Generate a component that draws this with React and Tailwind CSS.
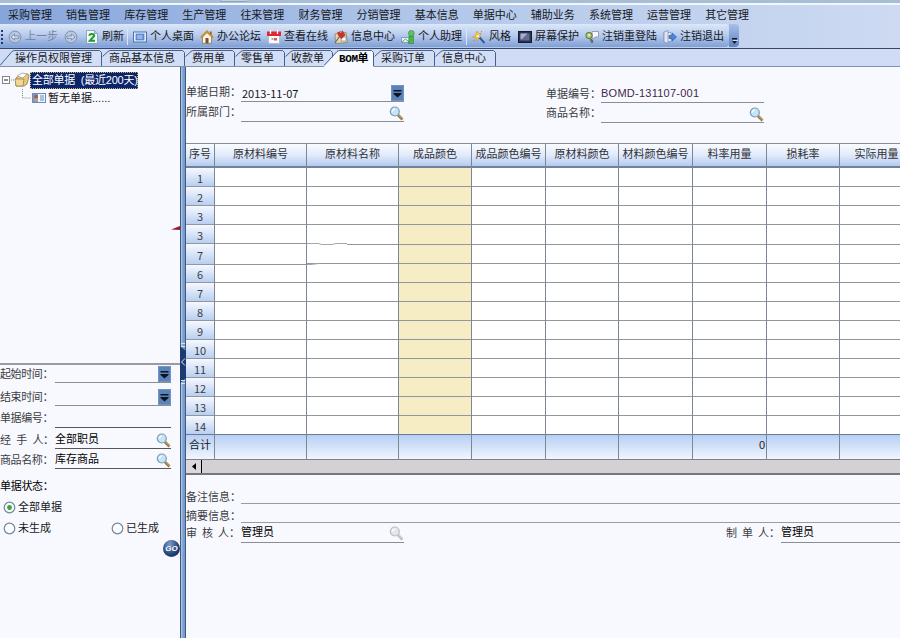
import React from 'react';

const menus = ['采购管理', '销售管理', '库存管理', '生产管理', '往来管理', '财务管理', '分销管理', '基本信息', '单据中心', '辅助业务', '系统管理', '运营管理', '其它管理'];

const tools = [
  { icon: 'back', text: '上一步', w: 'w-[56px]', off: true },
  { icon: 'forward', text: '', w: 'w-[21px]', off: true },
  { icon: 'refresh', text: '刷新', w: 'w-[48px]' },
  { icon: 'desktop', text: '个人桌面', w: 'w-[67px]', sep: true },
  { icon: 'home', text: '办公论坛', w: 'w-[67px]' },
  { icon: 'calendar', text: '查看在线', w: 'w-[67px]' },
  { icon: 'note', text: '信息中心', w: 'w-[67px]' },
  { icon: 'helper', text: '个人助理', w: 'w-[71px]' },
  { icon: 'style', text: '风格', w: 'w-[46px]', sep: true },
  { icon: 'screen', text: '屏幕保护', w: 'w-[67px]' },
  { icon: 'relogin', text: '注销重登陆', w: 'w-[78px]' },
  { icon: 'exit', text: '注销退出', w: 'w-[65px]' },
];

const tabs = [
  { text: '操作员权限管理', w: 102, slant: 12, pad: 'pl-[15px]' },
  { text: '商品基本信息', w: 83, slant: 6, pad: 'pl-[7px]' },
  { text: '费用单', w: 50, slant: 6, pad: 'pl-[7px]' },
  { text: '零售单', w: 50, slant: 6, pad: 'pl-[6px]' },
  { text: '收款单', w: 48, slant: 6, pad: 'pl-[6px]' },
  { text: 'BOM单', w: 50, slant: 13, pad: 'pl-[15px]', active: true },
  { text: '采购订单', w: 61, slant: 6, pad: 'pl-[7px]' },
  { text: '信息中心', w: 61, slant: 6, pad: 'pl-[7px]' },
];

const rowLabels = [1, 2, 3, 3, 7, 6, 7, 8, 9, 10, 11, 12, 13, 14];

const columns = [
  { name: '序号', w: 'w-[29px]', index: true },
  { name: '原材料编号', w: 'w-[92px]', skew: true },
  { name: '原材料名称', w: 'w-[92px]' },
  { name: '成品颜色', w: 'w-[73px]', fill: 'bg-[#f6edc5]' },
  { name: '成品颜色编号', w: 'w-[74px]' },
  { name: '原材料颜色', w: 'w-[73px]' },
  { name: '材料颜色编号', w: 'w-[74px]' },
  { name: '料率用量', w: 'w-[74px]', total: '0' },
  { name: '损耗率', w: 'w-[73px]' },
  { name: '实际用量', w: 'w-[74px]' },
];

function Icon({ name }) {
  switch (name) {
    case 'back':
    case 'forward':
      return (
        <svg width="14" height="14" viewBox="0 0 14 14" fill="none" stroke="#8191ae">
          <circle cx="7" cy="7" r="5.9" fill="#b9c8e2" />
          <path d={name === 'back' ? 'M3 7l3.500-3v2H11v2.400H6.500V10z' : 'M11 7L7.500 4v2H3v2.400h4.500V10z'} fill="#d3deef" />
        </svg>
      );
    case 'refresh':
      return (
        <svg width="14" height="14" viewBox="0 0 14 14" fill="none">
          <path d="M1.500.5h8l3 3v10h-11z" fill="#f4faf4" stroke="#7c99b5" strokeWidth=".8" />
          <path d="M9.500.5v3h3" fill="#a9c4dd" stroke="#7c99b5" strokeWidth=".7" />
          <path d="M4.200 5.800c.6-2.300 4.800-2.300 5 .2L4.800 10.800H10" stroke="#1f9a35" strokeWidth="2" />
        </svg>
      );
    case 'desktop':
      return (
        <svg width="14" height="14" viewBox="0 0 14 14">
          <rect x=".5" y="2" width="13" height="10" fill="#e4eefc" stroke="#4a72b4" />
          <rect x="3" y="4" width="8" height="6" fill="#6e9de0" stroke="#3c66ad" strokeWidth=".6" />
          <path d="M4 6h5M4 8h5" stroke="#c6dcf7" strokeWidth=".8" />
        </svg>
      );
    case 'home':
      return (
        <svg width="14" height="14" viewBox="0 0 14 14">
          <path d="M2.500 7v6.300h9V7L7 2.500z" fill="#fdf6e0" stroke="#8d7550" strokeWidth=".8" />
          <path d="M.7 7.700L7 1.300l6.300 6.400" fill="none" stroke="#c98d2f" strokeWidth="1.800" />
          <path d="M10 1.500h1.600v3.400L10 3.400z" fill="#9c4f2e" />
          <rect x="5.500" y="8" width="3" height="5.300" fill="#765333" />
        </svg>
      );
    case 'calendar':
      return (
        <svg width="14" height="14" viewBox="0 0 14 14">
          <rect x="1.500" y="5" width="11" height="8.500" fill="#fafafa" stroke="#a7b2c4" strokeWidth=".7" />
          <path d="M0 1.500h14V6H0z" fill="#df2632" />
          <path d="M3.500 0v4M10.500 0v4" stroke="#fff" strokeWidth="1.300" />
          <path d="M4.500 8h2v2h-2z" fill="#9bacc8" />
          <path d="M7 8h3v2.500H7z" fill="#d95a5a" />
        </svg>
      );
    case 'note':
      return (
        <svg width="14" height="14" viewBox="0 0 14 14">
          <path d="M1 4l11-1.500 1.500 10L1.500 13.500z" fill="#ecd59b" stroke="#82735c" strokeWidth=".7" />
          <path d="M8 7h4v4H7z" fill="#fff" stroke="#6f89b5" strokeWidth=".7" />
          <path d="M1 13l4-6" stroke="#5272aa" strokeWidth="1.300" />
          <path d="M3 2.500L8.500.5l3 4.500-4 4-2.500-2z" fill="#c53527" />
          <path d="M6 2.500l2-1" stroke="#f4a391" />
        </svg>
      );
    case 'helper':
      return (
        <svg width="14" height="14" viewBox="0 0 14 14">
          <path d="M.5 7.500h8v5h-8z" fill="#e9f1fa" stroke="#6783ad" strokeWidth=".7" />
          <path d="M1 12l3.500-3L8 12" fill="none" stroke="#57a86a" strokeWidth="1" />
          <path d="M8 6h4.500v7.500h-5z" fill="#4bb548" stroke="#32833a" strokeWidth=".6" />
          <circle cx="10.300" cy="3.300" r="2.900" fill="#62c35d" stroke="#32833a" strokeWidth=".6" />
        </svg>
      );
    case 'style':
      return (
        <svg width="14" height="14" viewBox="0 0 14 14">
          <path d="M5 1l1.300 2.700 3-.5-1.600 2.600 2 2.500-3-.4L5 11 4.200 7.900.5 7l3-1.700z" fill="#f7cf4b" stroke="#c6912d" strokeWidth=".6" />
          <path d="M6.500 6.500l6 6.500" stroke="#365b9c" strokeWidth="2" />
          <path d="M5.500 5.500l2 2" stroke="#fff" strokeWidth="1.500" />
          <path d="M9 2l1-1M1 11l2-1" stroke="#d48246" />
        </svg>
      );
    case 'screen':
      return (
        <svg width="14" height="14" viewBox="0 0 14 14">
          <rect x=".5" y="1.500" width="13" height="11" fill="#28334f" stroke="#141c30" />
          <rect x="2.500" y="3.500" width="9" height="7" fill="#646b93" />
          <path d="M2.500 3.500h7l-5 5-2 1z" fill="#aab0ca" />
        </svg>
      );
    case 'relogin':
      return (
        <svg width="14" height="14" viewBox="0 0 14 14">
          <path d="M7 1.500h6.500V7H10L7.500 9.500z" fill="#f5f8fc" stroke="#8291aa" strokeWidth=".8" />
          <circle cx="4" cy="5.500" r="3.200" fill="#a5bd67" stroke="#576b3e" strokeWidth=".8" />
          <circle cx="4" cy="5.300" r="1.200" fill="#e5edcc" />
          <path d="M5.500 8.500L8 11l-1 2-2-3.500" fill="#668246" stroke="#4b613b" strokeWidth=".8" />
        </svg>
      );
    case 'exit':
      return (
        <svg width="14" height="14" viewBox="0 0 14 14">
          <path d="M1 2.500h7v9H1z" fill="#eef4fc" stroke="#8493ad" strokeWidth=".8" />
          <path d="M1 2l4-1.500v13L1 12z" fill="#dfe7f2" stroke="#8493ad" strokeWidth=".8" />
          <path d="M6 5.500h3.200V3L13.500 7l-4.300 4V8.500H6z" fill="#4f86dc" stroke="#2c5baa" strokeWidth=".7" />
        </svg>
      );
    default:
      return null;
  }
}

function Magnifier({ dim }) {
  return (
    <svg width="15" height="15" viewBox="0 0 15 15" className="shrink-0">
      <path d="M8.500 8.500l5 5" stroke={dim ? '#b9b9b9' : '#8d7442'} strokeWidth="2.600" />
      <path d="M9 8.500l4.500 4.500" stroke={dim ? '#dcdcdc' : '#d8b366'} strokeWidth="1" />
      <circle cx="5.800" cy="5.500" r="4.500" fill={dim ? '#e6e6ea' : '#c4e4f8'} stroke={dim ? '#bcbcc0' : '#7c9abb'} strokeWidth="1.200" />
      <path d="M3.500 5.500c0-1.500 1-2.400 2.400-2.400" stroke="#fff" fill="none" strokeWidth="1.300" />
    </svg>
  );
}

function DropButton() {
  return (
    <span className="flex h-4 w-[13px] shrink-0 items-center justify-center border border-[#7294c2] bg-[#5b83b9]">
      <svg width="9" height="9" viewBox="0 0 9 9">
        <path d="M.5 1h8v1.500h-8zM.5 4h8v1L4.500 8.500.5 5z" fill="#0c1422" />
      </svg>
    </span>
  );
}

// label on the left, underlined value box on the right
function Field({ label, value, tool, h, box, line = 'border-[#8b8d94]', labelClass = 'w-[55px]', valueClass = '' }) {
  return (
    <div className={`flex ${h}`}>
      <div className={`${labelClass} flex shrink-0 items-end whitespace-nowrap text-[#3b3c42]`}>
        <span className="leading-[17px]">{label}</span>
      </div>
      <div className={`${box} flex items-end justify-between border-b ${line}`}>
        <span className={`whitespace-nowrap leading-[17px] ${valueClass}`}>{value}</span>
        {tool}
      </div>
    </div>
  );
}

function Radio({ text, checked }) {
  return (
    <label className="flex items-center gap-[2px] leading-4">
      <svg width="13" height="13" viewBox="0 0 13 13">
        <circle cx="6.500" cy="6.500" r="5.300" fill="#fbfcfd" stroke="#7189a0" strokeWidth="1.200" />
        {checked && <circle cx="6.500" cy="6.500" r="2.400" fill="#35a937" />}
      </svg>
      {text}
    </label>
  );
}

function Tab({ tab }) {
  const { w, slant } = tab;
  return (
    <div
      className={`relative flex h-[17px] shrink-0 items-center ${tab.pad} ${tab.active ? '-ml-[9px] z-10 font-bold text-black' : ''}`}
      style={{ width: w }}
    >
      <svg className="absolute left-0 top-0" width={w} height="18">
        <path
          d={`M0 ${slant > 6 ? 17.5 : 8} L${slant} 3.500 Q${slant + 1} 1.500 ${slant + 4} 1.500 H${w - 2.5} L${w - 0.5} 3.500 V18 H0 Z`}
          fill={tab.active ? '#f8f9fe' : '#d2ddf6'}
        />
        <path
          d={`M${slant > 6 ? 0 : 0.5} ${slant > 6 ? 16.5 : 7.5} L${slant} 2.500 Q${slant + 1} 1.500 ${slant + 3} 1.500 H${w - 2.5} L${w - 0.5} 3.500 V17`}
          fill="none"
          stroke="#45608d"
        />
        {!tab.active && <path d={`M0 17.500H${w}`} stroke="#7e93a9" />}
      </svg>
      <span className="relative whitespace-nowrap pt-[2px]">
        {tab.active ? (
          <>
            <span className="font-['Liberation_Mono'] text-[11px] tracking-[-0.4px]">BOM</span>单
          </>
        ) : tab.text}
      </span>
    </div>
  );
}

function rowHeight(i, skewed) {
  if (skewed) return i === 4 ? 'h-[21px]' : i === 5 ? 'h-[18px]' : 'h-[19px]';
  return i === 3 ? 'h-[20px]' : 'h-[19px]';
}

function Column({ col }) {
  return (
    <div className={`${col.w} shrink-0 border-r border-[#7d8694]`}>
      <div className="flex h-[24px] items-center justify-center whitespace-nowrap border-b-2 border-[#71819b] bg-linear-to-b from-[#f9fbff] via-[#e2ebfa] to-[#b4cbef] pb-px text-[#303238]">
        {col.name}
      </div>
      {rowLabels.map((label, i) => (
        <div
          key={i}
          className={`flex items-center justify-center border-b ${i === 13 ? 'border-[#69799a]' : 'border-[#91969f]'} ${rowHeight(i, col.index || col.skew)} ${col.index ? 'bg-linear-to-b from-[#f6f9ff] to-[#b9cff1]' : col.fill || 'bg-white'}`}
        >
          {col.index && <span className="pt-px font-['Noto_Sans_CJK_SC',sans-serif] text-[11px] leading-4 text-[#3b3d45]">{label}</span>}
        </div>
      ))}
      <div className={`flex h-[26px] items-center border-b-2 border-[#7d7f88] bg-linear-to-b from-[#b7cef3] to-[#f1f6fe] pb-[3px] ${col.index ? 'justify-center' : 'justify-end pr-px'}`}>
        {col.index ? '合计' : col.total}
      </div>
    </div>
  );
}

function Sidebar() {
  return (
    <aside className="relative flex w-[180px] shrink-0 flex-col overflow-hidden bg-[#f8f9fe]">
      <div className="h-[296px] pt-[4px]">
        <div className="flex h-[18px] items-center">
          <svg width="30" height="18" viewBox="0 0 30 18">
            <rect x="2.500" y="5.500" width="7" height="7" fill="#fff" stroke="#848484" />
            <path d="M4 9h4" stroke="#222" />
            <path d="M11 9h4" stroke="#888" strokeDasharray="1 1" />
            <path d="M16 7l5-4h7l1 2-2 8-3 2h-8z" fill="#e9c976" stroke="#8a7656" strokeWidth=".8" />
            <path d="M17 5l5-3 5 1-4 4z" fill="#fbfbfb" stroke="#8d8d8d" strokeWidth=".6" />
            <path d="M15 8h9l-1 7h-7z" fill="#f3d98d" stroke="#8a7656" strokeWidth=".7" />
          </svg>
          <span className="flex h-[17px] w-[108px] items-center whitespace-pre bg-[#0b246a] pl-[2px] tracking-[-0.22px] text-white outline-1 -outline-offset-1 outline-dotted outline-[#c9b27c]">全部单据  (最近200天)</span>
        </div>
        <div className="flex h-[18px] items-center">
          <svg width="47" height="18" viewBox="0 0 47 18">
            <path d="M22.500-2v11h9" fill="none" stroke="#888" strokeDasharray="1 1" />
            <rect x="32.500" y="4.500" width="13" height="9" fill="#eef4fd" stroke="#6d8cbd" />
            <rect x="33" y="5" width="5" height="8" fill="#7b9bce" />
            <circle cx="36" cy="7.500" r="1.800" fill="#c44f33" />
            <path d="M34 12c0-3 4-3 4 0z" fill="#d8a23f" />
            <path d="M40 7h4M40 9h4M40 11h4" stroke="#6e87b4" />
          </svg>
          <span className="pl-px text-[#15161a]">暂无单据......</span>
        </div>
      </div>
      <svg className="absolute right-0 top-[159px]" width="9" height="5"><path d="M0 3.500L9 0v4z" fill="#9e1c22" /></svg>

      <div className="h-[275px] border-t-2 border-[#9a9ba0]">
        <Field label="起始时间：" h="h-[18px] mb-[4px]" labelClass="w-[55px] tracking-[-0.4px]" box="w-[116px]" tool={<DropButton />} />
        <Field label="结束时间：" h="h-[19px] mb-[4px]" labelClass="w-[55px] tracking-[-0.4px]" box="w-[116px]" tool={<DropButton />} />
        <Field label="单据编号：" h="h-[18px]" labelClass="w-[55px] tracking-[-0.4px] -mt-[3px] pb-px" box="w-[116px]" line="border-[#55565c]" />
        <Field label="经 手 人：" h="h-[21px]" labelClass="w-[55px] tracking-[-0.4px] [word-spacing:3px]" box="w-[116px]" line="border-[#55565c]" value="全部职员" valueClass="text-black" tool={<Magnifier />} />
        <Field label="商品名称：" h="h-[20px]" labelClass="w-[55px] tracking-[-0.4px]" box="w-[116px]" line="border-[#55565c]" value="库存商品" valueClass="text-black" tool={<Magnifier />} />
        <div className="mt-[9px] leading-4 tracking-[-0.3px] text-black">单据状态：</div>
        <div className="mt-[5px] flex h-4 items-center pl-[3px]"><Radio text="全部单据" checked /></div>
        <div className="mt-[5px] flex h-4 items-center gap-[60px] pl-[3px]">
          <Radio text="未生成" />
          <Radio text="已生成" />
        </div>
        <button className="ml-[163px] mt-[4px] flex h-[17px] w-[17px] items-center justify-center rounded-full bg-radial-[at_40%_25%] from-[#7f9cca] to-[#19396f] to-65% font-['Liberation_Sans'] text-[8px] font-bold italic text-white">GO</button>
      </div>
    </aside>
  );
}

function Splitter() {
  return (
    <div className="flex w-[6px] shrink-0 flex-col border-x border-[#41587f] bg-linear-to-r from-[#b3caeb] via-[#7c9fd2] to-[#7699cd] pt-[275px]">
      <svg width="6" height="44" viewBox="0 0 6 44" className="-ml-px max-w-none">
        <path d="M0 4l6 5v27l-6 5z" fill="#1d3b73" />
        <path d="M5 16.500L1.500 20 5 23.500" fill="none" stroke="#e5eefc" />
        <path d="M1 1.500h4M1 4.500h4M1 38.500h4M1 41.500h4" stroke="#d9e6f8" />
      </svg>
    </div>
  );
}

export default function App() {
  return (
    <div className="flex h-[638px] w-[900px] flex-col overflow-hidden bg-[#f8f9fe] font-['Liberation_Sans','Noto_Sans_CJK_SC',sans-serif] text-[11px] text-[#17181c]">
      <div className="flex h-[5px] shrink-0 justify-start border-b-2 border-[#f3f7fc] bg-[#a7bfd6]">
        <div className="ml-[220px] h-[2px] w-[27px] rounded-bl border-b border-l border-[#8ba6bf] bg-[#bed0e1]" />
      </div>

      <nav className="flex h-[19px] shrink-0 items-center bg-linear-to-r from-[#86a5dc] via-[#b3c8ea] to-[#cddaf2] pl-2 pt-px">
        {menus.map((m) => (
          <span key={m} className="w-[58.100px] shrink-0 whitespace-nowrap">{m}</span>
        ))}
      </nav>

      <div className="flex h-[25px] shrink-0 border-b border-[#36476a] bg-linear-to-r from-[#86a5dc] via-[#b3c8ea] to-[#cddaf2]">
        <div className="flex h-[23px] w-[729px] items-center rounded-r bg-linear-to-b from-[#dce8fa] via-[#b6caec] to-[#7f9fd5] pt-[2px]">
          <svg width="8" height="16" className="shrink-0"><path d="M2 1v14" stroke="#253a66" strokeWidth="2" strokeDasharray="2 2" /></svg>
          {tools.map((t) => (
            <div key={t.icon} className={`relative flex shrink-0 items-center gap-[3px] whitespace-nowrap ${t.w} ${t.off ? 'text-[#75849e]' : ''}`}>
              {t.sep && <i className="absolute -left-[6px] h-4 w-px bg-[#dbe6f8]" />}
              <span className="shrink-0"><Icon name={t.icon} /></span>
              {t.text}
            </div>
          ))}
        </div>
        <div className="flex h-[23px] w-[10px] items-end justify-center rounded-r bg-linear-to-b from-[#a9c0e6] to-[#5f83c2] pb-[2px]">
          <svg width="7" height="7"><path d="M1 0h5v1.500H1zM1 3h5L3.500 6z" fill="#131a2a" /><path d="M2 2.500h5" stroke="#fff" strokeWidth=".7" /></svg>
        </div>
      </div>

      <div className="flex h-[18px] shrink-0 border-b border-[#7e93a9] bg-[#d0dcf6]">
        {tabs.map((t) => <Tab key={t.text} tab={t} />)}
      </div>

      <div className="flex min-h-0 flex-1">
        <Sidebar />
        <Splitter />
        <main className="flex min-w-0 flex-1 flex-col overflow-hidden">
          <div className="flex h-[76px] shrink-0">
            <div className="w-[360px] pt-[17px]">
              <Field label="单据日期：" h="h-[18px]" box="w-[163px]" labelClass="w-[55px] pb-px" value="2013-11-07" valueClass="pl-px translate-y-px font-['Noto_Sans_CJK_SC',sans-serif]" tool={<DropButton />} />
              <Field label="所属部门：" h="h-[20px]" box="w-[163px]" labelClass="w-[55px] pb-px" tool={<Magnifier />} />
            </div>
            <div className="pt-[18px]">
              <Field label="单据编号：" h="h-[18px]" box="w-[163px]" value="BOMD-131107-001" valueClass="tracking-[0.25px] text-[#42284f]" />
              <Field label="商品名称：" h="h-[20px]" box="w-[163px]" labelClass="w-[55px] pb-px" tool={<Magnifier />} />
            </div>
          </div>

          <div className="relative flex h-[317px] shrink-0 overflow-hidden border-t border-[#888c96]">
            {columns.map((c) => <Column key={c.name} col={c} />)}
            <svg className="absolute left-[121px] top-[96px]" width="46" height="26">
              <path d="M0 4h40" stroke="#fff" strokeWidth="4" />
              <path d="M0 3.500h11l4 1h10l4-1h11M0 24.500h4l8-1" fill="none" stroke="#a4a7ab" />
            </svg>
          </div>

          <div className="flex h-[15px] shrink-0 border-b-2 border-[#77777b] bg-[#d3d1d4]">
            <div className="flex w-[16px] items-center justify-center border-r border-black bg-[#dbd9dc]">
              <svg width="5" height="8"><path d="M5 0v7L1 3.500z" fill="#000" /></svg>
            </div>
          </div>

          <div className="pt-[12px]">
            <Field label="备注信息：" h="h-[17px]" box="flex-1" line="border-[#9b9ca1]" labelClass="w-[55px] -mb-[2px]" />
            <Field label="摘要信息：" h="h-[19px]" box="flex-1" line="border-[#9b9ca1]" labelClass="w-[55px] -mb-[2px]" />
            <div className="flex">
              <Field label="审 核 人：" h="h-[20px]" box="w-[163px]" labelClass="w-[55px] pb-px [word-spacing:2px]" value="管理员" valueClass="text-black pb-px" tool={<span className="pb-px"><Magnifier dim /></span>} />
              <div className="ml-[322px]">
                <Field label="制 单 人：" h="h-[20px]" box="w-[125px]" labelClass="w-[55px] pb-px [word-spacing:2px]" value="管理员" valueClass="text-black pb-px" />
              </div>
            </div>
          </div>
        </main>
      </div>
    </div>
  );
}
